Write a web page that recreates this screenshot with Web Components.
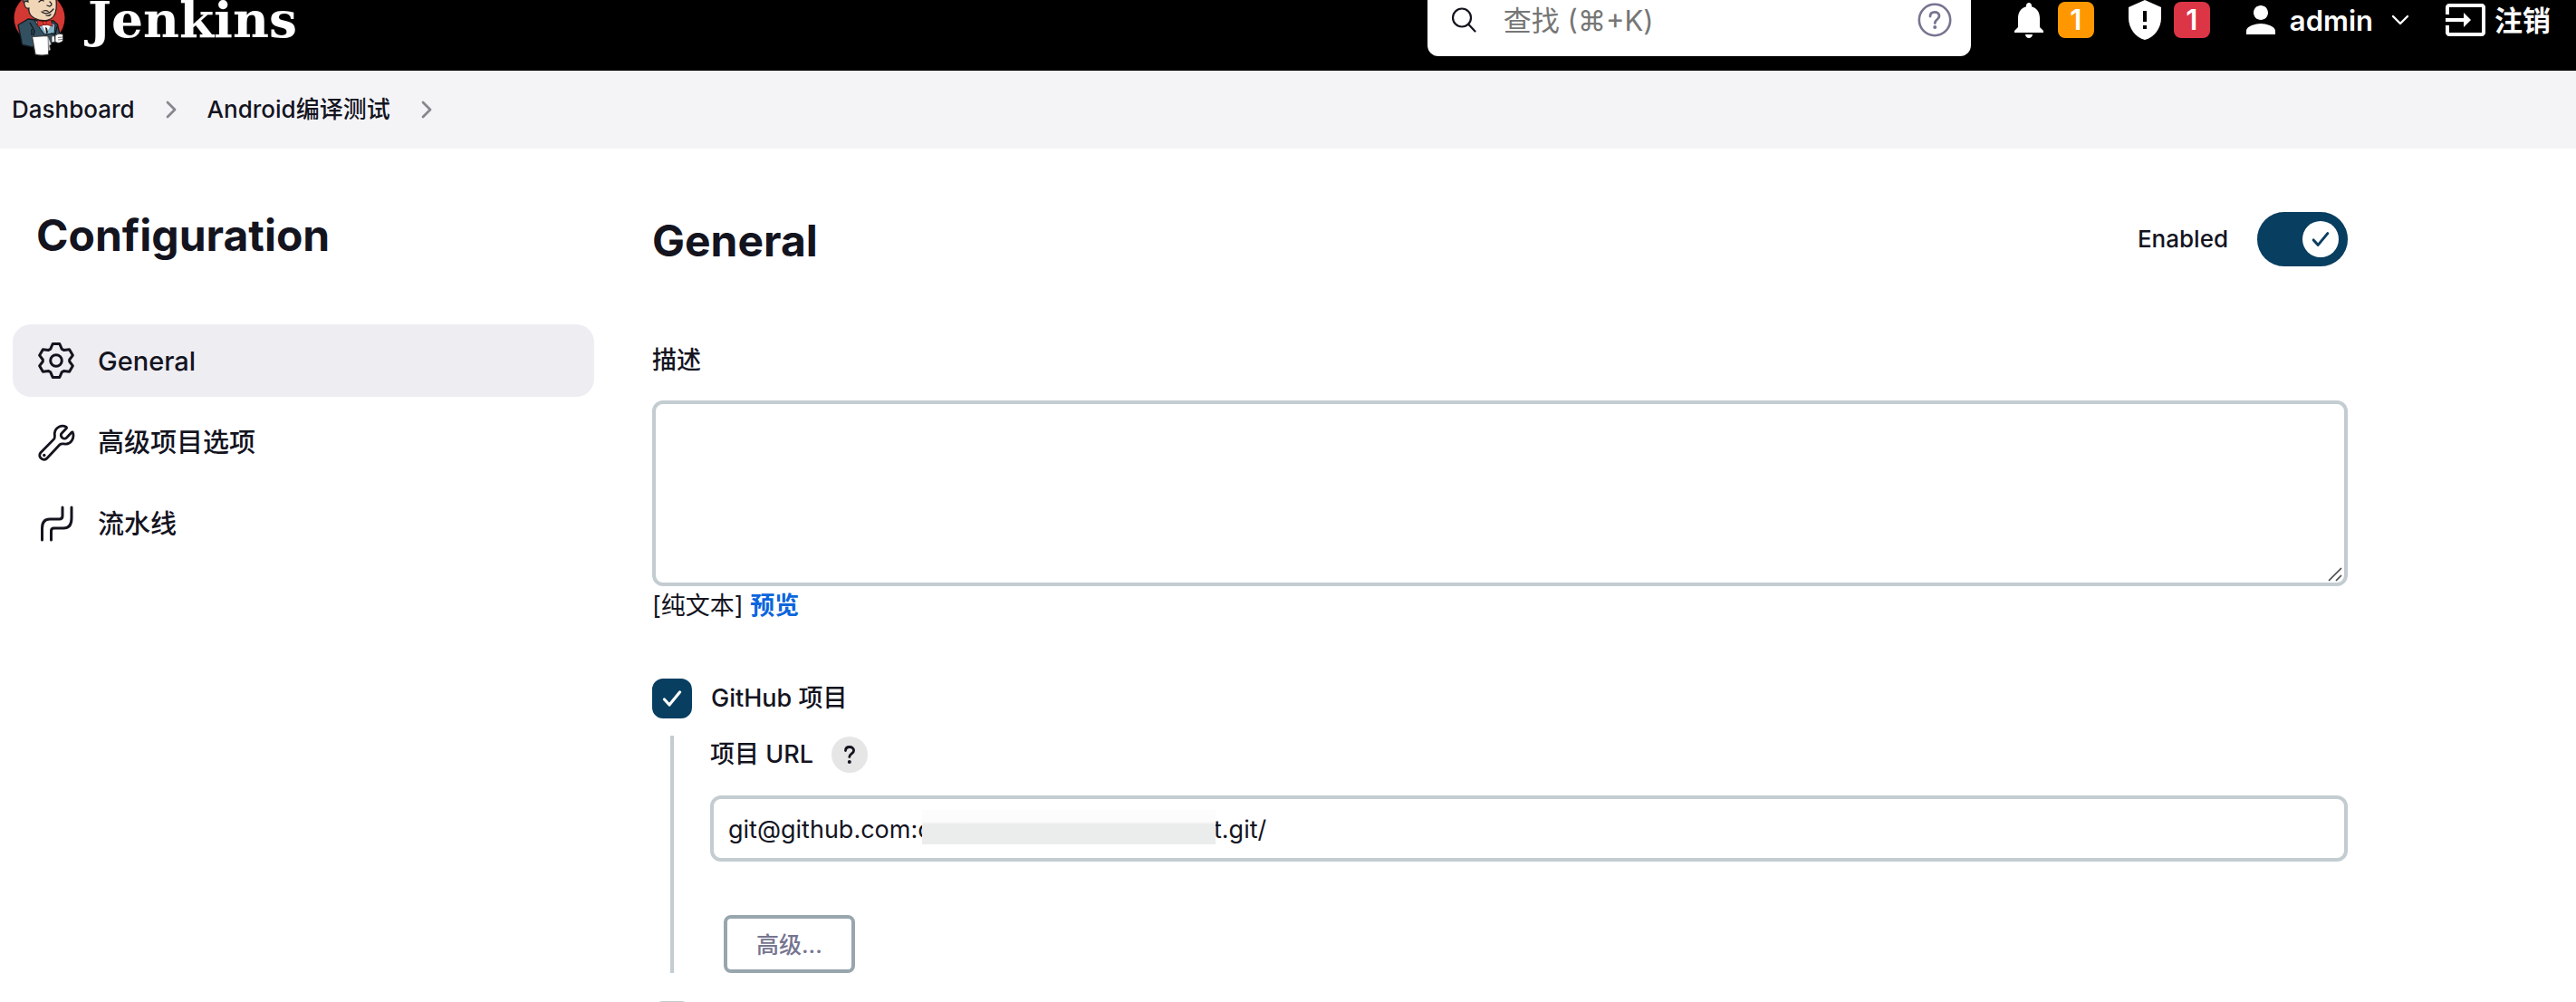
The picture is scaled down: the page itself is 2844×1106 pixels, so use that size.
<!DOCTYPE html>
<html lang="zh-CN">
<head>
<meta charset="utf-8">
<title>Android编译测试 Config [Jenkins]</title>
<style>
  :root {
    --text: #14141f;
    --muted: #767590;
    --line: #c3ccd1;
    --primary: #083e60;
    --link: #0b65dc;
  }
  html, body { height: 100%; }
  body {
    margin: 0;
    overflow: hidden;
    background: #fff;
    color: var(--text);
    font: 400 27px/40px Inter, "Noto Sans CJK SC", sans-serif;
  }
</style>
</head>
<body>
<jk-app></jk-app>

<script>
const define = (name, html, setup) => {
  const template = document.createElement('template');
  template.innerHTML = '<style>*{box-sizing:border-box}</style>' + html;
  customElements.define(name, class extends HTMLElement {
    constructor() {
      super();
      this.attachShadow({ mode: 'open' }).append(template.content.cloneNode(true));
    }
    connectedCallback() { if (setup) setup(this, this.shadowRoot); }
  });
};

const ICONS = {
  bell: ['0 0 24 24', '<path fill="currentColor" d="M12 22c1.1 0 2-.9 2-2h-4c0 1.1.89 2 2 2zm6-6v-5c0-3.07-1.64-5.64-4.5-6.32V4c0-.83-.67-1.5-1.5-1.5s-1.5.67-1.5 1.5v.68C7.63 5.36 6 7.92 6 11v5l-2 2v1h16v-1l-2-2z"/>'],
  shield: ['0 0 24 24', '<path fill="currentColor" fill-rule="evenodd" d="M12 1L3 5v6c0 5.55 3.84 10.74 9 12 5.16-1.26 9-6.45 9-12V5l-9-4zm1 16h-2v-2h2v2zm0-4h-2V7h2v6z"/>'],
  person: ['0 0 24 24', '<path fill="currentColor" d="M12 12c2.21 0 4-1.79 4-4s-1.79-4-4-4-4 1.79-4 4 1.79 4 4 4zm0 2c-2.67 0-8 1.34-8 4v2h16v-2c0-2.66-5.33-4-8-4z"/>'],
  logout: ['0 0 24 24', '<path fill="currentColor" d="M21 3.01H3c-1.1 0-2 .9-2 2V9h2V4.99h18v14.03H3V15H1v4.01c0 1.1.9 1.98 2 1.98h18c1.1 0 2-.88 2-1.98v-14c0-1.11-.9-2-2-2zM11 16l4-4-4-4v3H1v2h10v3z"/>'],
  down: ['0 0 24 24', '<path fill="none" stroke="currentColor" stroke-width="2.4" stroke-linecap="round" stroke-linejoin="round" d="M4 8l8 8 8-8"/>'],
  right: ['0 0 24 24', '<path fill="none" stroke="currentColor" stroke-width="2.8" stroke-linecap="round" stroke-linejoin="round" d="M8 4l8 8-8 8"/>'],
  search: ['0 0 28 28', '<g fill="none" stroke="currentColor" stroke-width="2.2" stroke-linecap="round"><circle cx="12" cy="11.500" r="10"/><path d="M19.200 18.800L26.500 26.500"/></g>'],
  help: ['0 0 40 40', '<circle cx="20" cy="20" r="17.200" fill="none" stroke="currentColor" stroke-width="2.600"/><path fill="none" stroke="currentColor" stroke-width="2.800" stroke-linecap="round" d="M15 16c0-3 2.200-4.600 5-4.600s5 1.700 5 4.300c0 3.800-4.800 3.900-4.800 7.800"/><circle cx="20.200" cy="28" r="2" fill="currentColor"/>'],
  question: ['0 0 40 40', '<path fill="none" stroke="currentColor" stroke-width="2.800" stroke-linecap="round" stroke-linejoin="round" d="M15.500 15.500c0-2.800 2-4 4.500-4s4.600 1.500 4.600 3.900c0 3.500-4.800 3.500-4.800 7.100"/><circle cx="19.800" cy="28" r="2" fill="currentColor"/>'],
  gear: ['0 0 44 44', '<g fill="none" stroke="currentColor" stroke-width="3" stroke-linejoin="round"><path d="M18.200 3.500h7.600l2.400 5.700 2.200 1.200 6.200-.7 3.800 6.500-3.700 4.800v2l3.700 4.800-3.800 6.500-6.200-.7-2.200 1.200-2.400 5.700h-7.600l-2.400-5.700-2.200-1.200-6.200.7-3.800-6.500 3.700-4.800v-2l-3.700-4.800 3.800-6.500 6.200.7 2.200-1.200z"/><circle cx="22" cy="22" r="6.300"/></g>'],
  wrench: ['0 0 44 44', '<path fill="none" stroke="currentColor" stroke-width="2.800" stroke-linejoin="round" d="M33 5.200C28 2.500 21 5.500 20.300 12c-.2 2.500.8 5-.7 6.600L5 33.500c-2.300 2.500-1 6 1.200 7.100 2 1 4.600.6 6-1.100L26 24.700c1.700-1.700 4.300-.6 6.700-.6C39 23.600 42.200 17 40.500 11.600c-.2-.7-.9-.8-1.400-.3l-5.700 6c-1.500 1.400-3.600.9-4.900-.4-1.400-1.400-1.700-3.400-.4-4.700l5.200-5.400c.4-.5.300-1.200-.3-1.600z"/><circle cx="8.800" cy="36.500" r="1.700" fill="currentColor"/>'],
  pipeline: ['0 0 44 44', '<path fill="none" stroke="currentColor" stroke-width="3" stroke-linecap="round" stroke-linejoin="round" d="M29 4v9.500q0 3.500-3.500 3.500H15Q6.500 17 6.500 27v13M39 4v12q0 11-9 11H19.500q-3 0-3 3v10"/>'],
  check: ['0 0 24 24', '<path fill="none" stroke="currentColor" stroke-width="3.200" stroke-linecap="round" stroke-linejoin="round" d="M3.500 13l5.500 6L20.500 5"/>'],
};

define('jk-icon', `
  <style>
    :host { display: block; flex: none; width: var(--size, 48px); height: var(--size, 48px); }
    svg { display: block; width: 100%; height: 100%; }
  </style>
  <svg aria-hidden="true"></svg>`,
  (host, root) => {
    const [box, shapes] = ICONS[host.getAttribute('name')];
    const svg = root.querySelector('svg');
    svg.setAttribute('viewBox', box);
    svg.innerHTML = shapes;
  });

define('jk-logo', `
  <style>
    :host { display: block; }
    a { display: flex; align-items: center; gap: 17px; color: #fff; text-decoration: none;
        font: 700 55px/112px "DejaVu Serif", serif; }
    svg { display: block; width: 80px; height: 112px; flex: none; }
  </style>
  <a href="#">
    <svg viewBox="0 -34 80 112" aria-hidden="true">
      <circle cx="43.500" cy="20" r="28" fill="#d33833"/>
      <path d="M27 -16Q45 -30 60 -16L63 6L31 12Z" fill="#2b2b2b"/>
      <path d="M25 0Q26 5 30 5L33 -4L26 -6Z" fill="#6d6b6d" stroke="#231f20"/>
      <path d="M24.500 49.500L20 27.500L31 21L40 22L59 23L63.500 27L66 38L58 41L57 48L36 52Z" fill="#335061" stroke="#10171c" stroke-width="1.300" stroke-linejoin="round"/>
      <path d="M33 -12Q30 -4 31 2Q26 0 27 5Q28 10 32 9Q31 16 38 20Q46 24 53 22Q61 20 62 10Q63 -2 59 -14Z" fill="#f0d6b7" stroke="#231f20" stroke-width="1.200"/>
      <path d="M46 13Q52 18 59 10M48 12Q51 11 53 12.500M55 2Q59 5 55 7L52 6M43 2Q46 -1 48 1M51 17Q54 18 56 16" fill="none" stroke="#231f20" stroke-width="1.300" stroke-linecap="round"/>
      <path d="M38 23L49 38L60 37L61 27L55 24Z" fill="#81b0c4" stroke="#10171c"/>
      <path d="M46 27L51 37L56 28Z" fill="#fff"/>
      <path d="M50 30L52 31L53 36L51 37Z" fill="#1d1919"/>
      <path d="M33 25L38 34L37 39M63 29L61 38L56 37M35 39L35 32" fill="none" stroke="#10171c" stroke-width="1.300"/>
      <path d="M41 22.500L48 24L50 24L56 22L58 29L51 27L48 27.500L42 29.500Z" fill="#d33833" stroke="#6b1512" stroke-width=".8"/>
      <path d="M48 23.500h3v4h-3z" fill="#ef3d3a" stroke="#6b1512" stroke-width=".7"/>
      <path d="M35.500 40.500L53 39.500L54 44L53.500 60Q46 62 39 60Z" fill="#fff" stroke="#3a3a3a" stroke-width="1.200"/>
      <path d="M53 41L53.500 56L55.500 55L54.500 50L56.500 49" fill="#d7d7d7" stroke="#777" stroke-width=".8"/>
      <path d="M57 40L60 39.500L61 46L57 47Z" fill="#fff" stroke="#333" stroke-width=".8"/>
      <path d="M61 39Q65 36 69.500 38L69.500 45Q65 49 61 46Z" fill="#fff" stroke="#333" stroke-width=".8"/>
      <path d="M64 41.500L69 41M64 44L69 43.500" fill="none" stroke="#555" stroke-width=".8"/>
    </svg>
    <span>Jenkins</span>
  </a>`);

define('jk-search', `
  <style>
    :host { display: block; width: 600px; }
    form { display: flex; align-items: center; height: 80px; padding: 0 20px 0 26px; gap: 30px; border-radius: 12px; background: #fff; color: var(--text); }
    input { flex: 1; min-width: 0; border: 0; padding: 2px 0 0; outline: 0; background: none; font: inherit; font-size: 31px; line-height: 48px; color: inherit; }
    input::placeholder { color: #767676; opacity: 1; }
    a { color: var(--muted); }
  </style>
  <form role="search">
    <jk-icon name="search" style="--size:28px"></jk-icon>
    <input type="text" placeholder="查找 (⌘+K)" aria-label="查找">
    <a href="#" aria-label="帮助"><jk-icon name="help" style="--size:40px"></jk-icon></a>
  </form>`);

define('jk-alert-link', `
  <style>
    :host { display: block; }
    a { display: flex; align-items: center; gap: 8px; color: #fff; text-decoration: none; }
    span { width: 40px; border-radius: 8px; text-align: center; background: var(--badge); font-size: 31px; font-weight: 600; line-height: 40px; }
  </style>
  <a href="#"><slot name="icon"></slot><span><slot></slot></span></a>`);

define('jk-header', `
  <style>
    :host { display: block; background: #000; color: #fff; }
    header { display: flex; align-items: center; height: 112px; margin-top: -34px; padding-right: 28px; }
    jk-search { margin-left: auto; margin-right: 40px; }
    .tools { display: flex; align-items: center; gap: 32px; font-size: 31px; font-weight: 600; }
    .tools a { display: flex; align-items: center; gap: 8px; color: inherit; text-decoration: none; }
    .tools a span { padding-top: 2px; }
    .user { display: flex; align-items: center; gap: 18px; padding-right: 4px; }
    button { display: block; padding: 0; border: 0; background: none; color: inherit; }
  </style>
  <header>
    <jk-logo></jk-logo>
    <jk-search></jk-search>
    <div class="tools">
      <jk-alert-link style="--badge:#ff9800"><jk-icon slot="icon" name="bell"></jk-icon>1</jk-alert-link>
      <jk-alert-link style="--badge:#dc3545"><jk-icon slot="icon" name="shield"></jk-icon>1</jk-alert-link>
      <div class="user">
        <a href="#"><jk-icon name="person"></jk-icon><span>admin</span></a>
        <button type="button" aria-label="admin"><jk-icon name="down" style="--size:24px"></jk-icon></button>
      </div>
      <a href="#"><jk-icon name="logout"></jk-icon><span>注销</span></a>
    </div>
  </header>`);

define('jk-breadcrumbs', `
  <style>
    :host { display: block; background: #f4f4f7; }
    nav { display: flex; align-items: center; height: 86px; padding-left: 13px; gap: 28px; font-size: 26px; font-weight: 500; }
    a { color: inherit; text-decoration: none; }
    jk-icon { --size: 24px; color: #86868f; }
  </style>
  <nav>
    <a href="#">Dashboard</a><jk-icon name="right"></jk-icon>
    <a href="#">Android编译测试</a><jk-icon name="right"></jk-icon>
  </nav>`);

define('jk-nav-item', `
  <style>
    :host { display: block; }
    a { display: flex; align-items: center; gap: 24px; height: 80px; padding: 0 26px; border-radius: 20px; color: inherit; text-decoration: none; font-size: 29px; font-weight: 500; }
    span { padding-top: 2px; }
    :host([current]) a { background: #eeedf2; }
  </style>
  <a href="#"><slot name="icon"></slot><span><slot></slot></span></a>`);

define('jk-sidebar', `
  <style>
    :host { display: block; padding-top: 66px; }
    h1 { margin: 0 0 68px; padding-left: 26px; font-size: 48px; line-height: 60px; font-weight: 700; }
    nav { display: grid; gap: 10px; }
    jk-icon { --size: 44px; }
  </style>
  <h1>Configuration</h1>
  <nav>
    <jk-nav-item current><jk-icon slot="icon" name="gear"></jk-icon>General</jk-nav-item>
    <jk-nav-item><jk-icon slot="icon" name="wrench"></jk-icon>高级项目选项</jk-nav-item>
    <jk-nav-item><jk-icon slot="icon" name="pipeline"></jk-icon>流水线</jk-nav-item>
  </nav>`);

define('jk-toggle', `
  <style>
    :host { display: block; }
    label { display: flex; align-items: center; gap: 32px; font-weight: 500; font-size: 26px; }
    .switch { display: grid; align-items: center; justify-items: end; width: 100px; height: 60px; border-radius: 30px; background: var(--line); }
    .switch > * { grid-area: 1 / 1; }
    input { appearance: none; margin: 0; width: 100px; height: 60px; border-radius: 30px; }
    input:checked { background: var(--primary); }
    .knob { display: grid; place-items: center; width: 40px; height: 40px; margin-right: 10px; border-radius: 50%; background: #fff; color: var(--primary); pointer-events: none; }
  </style>
  <label><slot></slot>
    <span class="switch"><input type="checkbox" checked aria-label="Enabled"><span class="knob"><jk-icon name="check" style="--size:22px"></jk-icon></span></span>
  </label>`);

define('jk-description', `
  <style>
    :host { display: block; }
    label { display: block; margin-bottom: 24px; font-weight: 500; }
    .box { position: relative; }
    textarea { display: block; width: 100%; height: 205px; padding: 16px; border: 4px solid var(--line); border-radius: 12px; background: #fff; font: inherit; color: inherit; resize: none; outline: 0; }
    svg { position: absolute; right: 6px; bottom: 5px; width: 16px; height: 16px; }
    p { margin: 2px 0 0; }
    a { color: var(--link); font-weight: 700; text-decoration: none; }
  </style>
  <label for="description">描述</label>
  <div class="box">
    <textarea id="description"></textarea>
    <svg viewBox="0 0 16 16" aria-hidden="true"><path d="M1 15L15 1M9 15l6-6" stroke="#444" stroke-width="1.600"/></svg>
  </div>
  <p>[纯文本] <a href="#">预览</a></p>`);

define('jk-checkbox', `
  <style>
    :host { display: block; }
    label { display: flex; align-items: center; gap: 21px; min-height: 44px; font-weight: 500; }
    .box { display: grid; place-items: center; width: 44px; height: 44px; }
    .box > * { grid-area: 1 / 1; }
    input { appearance: none; margin: 0; width: 44px; height: 44px; border: 4px solid var(--line); border-radius: 12px; background: #fff; }
    input:checked { border-color: var(--primary); background: var(--primary); }
    jk-icon { --size: 24px; color: #fff; pointer-events: none; }
  </style>
  <label><span class="box"><input type="checkbox"><jk-icon name="check"></jk-icon></span><slot></slot></label>`,
  (host, root) => { root.querySelector('input').checked = host.hasAttribute('checked'); });

define('jk-url-field', `
  <style>
    :host { display: block; }
    .head { display: flex; align-items: center; gap: 20px; margin-bottom: 25px; font-weight: 500; }
    button { display: block; padding: 0; border: 0; border-radius: 50%; background: #e6e6e7; color: var(--text); }
    .box { position: relative; }
    input { display: block; width: 100%; height: 73px; padding: 2px 16px 0; border: 4px solid var(--line); border-radius: 12px; background: #fff; font: inherit; color: inherit; outline: 0; }
    .mask { position: absolute; left: 234px; top: 16px; width: 324px; height: 38px; background: linear-gradient(#fcfcfc 13px, #ebecec 16px); }
  </style>
  <div class="head"><label for="url">项目 URL</label>
    <button type="button" aria-label="帮助"><jk-icon name="question" style="--size:40px"></jk-icon></button></div>
  <div class="box"><input id="url" type="text"><span class="mask"></span></div>`,
  (host, root) => { root.querySelector('input').value = 'git@github.com:c' + '\u00a0'.repeat(41) + 't.git/'; });

define('jk-button', `
  <style>
    :host { display: block; }
    button { display: block; height: 64px; padding: 2px 32px 0; border: 4px solid #98a6ad; border-radius: 8px; background: #fff; color: var(--muted); font: inherit; font-size: 25px; font-weight: 500; line-height: 40px; }
  </style>
  <button type="button"><slot></slot></button>`);

define('jk-config', `
  <style>
    :host { display: block; padding-top: 70px; }
    .head { display: flex; align-items: center; justify-content: space-between; margin-bottom: 84px; }
    h2 { margin: 0; padding-top: 4px; font-size: 48px; line-height: 56px; font-weight: 700; }
    jk-description { margin-bottom: 60px; }
    .nested { margin: 19px 0 31px 20px; padding-left: 40px; border-left: 4px solid var(--line); }
    jk-url-field { margin-bottom: 59px; padding-top: 1px; }
    jk-button { width: max-content; margin-left: 15px; }
  </style>
  <div class="head"><h2>General</h2><jk-toggle>Enabled</jk-toggle></div>
  <jk-description></jk-description>
  <jk-checkbox checked>GitHub 项目</jk-checkbox>
  <div class="nested">
    <jk-url-field></jk-url-field>
    <jk-button>高级...</jk-button>
  </div>
  <jk-checkbox></jk-checkbox>`);

define('jk-app', `
  <style>
    :host { display: block; }
    .page { display: flex; align-items: flex-start; gap: 64px; padding: 0 14px; }
    jk-sidebar { flex: 0 0 642px; }
    jk-config { flex: 1; max-width: 1872px; }
  </style>
  <jk-header></jk-header>
  <jk-breadcrumbs></jk-breadcrumbs>
  <main class="page"><jk-sidebar></jk-sidebar><jk-config></jk-config></main>`);
</script>
</body>
</html>
